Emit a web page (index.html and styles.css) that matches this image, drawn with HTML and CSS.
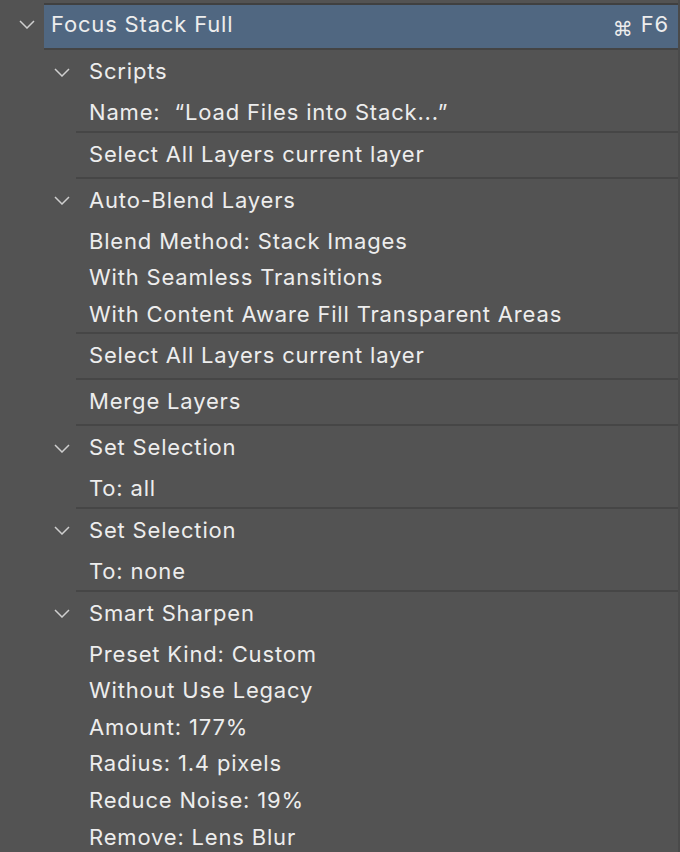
FILE: index.html
```html
<!DOCTYPE html>
<html>
<head>
<meta charset="utf-8">
<link rel="stylesheet" href="styles.css">
</head>
<body>
<div class="panel">
  <div class="action">
    <div class="action-chev">
      <svg width="16" height="9" viewBox="0 0 16 9"><path d="M1 1 L8 8 L15 1" fill="none" stroke="#cfcfcf" stroke-width="1.5"/></svg>
    </div>
    <div class="action-title">
      <span>Focus Stack Full</span>
      <span class="key"><span class="cmd">⌘</span>F6</span>
    </div>
  </div>

  <div class="step">
    <div class="step-chev"><svg width="16" height="9" viewBox="0 0 16 9"><path d="M1 1 L8 8 L15 1" fill="none" stroke="#cfcfcf" stroke-width="1.5"/></svg></div>
    <div class="step-body">
      <div class="row head">Scripts</div>
      <div class="row">Name:  “Load Files into Stack...”</div>
    </div>
  </div>

  <div class="step">
    <div class="step-chev"></div>
    <div class="step-body">
      <div class="row head">Select All Layers current layer</div>
    </div>
  </div>

  <div class="step">
    <div class="step-chev"><svg width="16" height="9" viewBox="0 0 16 9"><path d="M1 1 L8 8 L15 1" fill="none" stroke="#cfcfcf" stroke-width="1.5"/></svg></div>
    <div class="step-body">
      <div class="row head">Auto-Blend Layers</div>
      <div class="row">Blend Method: Stack Images</div>
      <div class="row">With Seamless Transitions</div>
      <div class="row">With Content Aware Fill Transparent Areas</div>
    </div>
  </div>

  <div class="step">
    <div class="step-chev"></div>
    <div class="step-body">
      <div class="row head">Select All Layers current layer</div>
    </div>
  </div>

  <div class="step">
    <div class="step-chev"></div>
    <div class="step-body">
      <div class="row head">Merge Layers</div>
    </div>
  </div>

  <div class="step">
    <div class="step-chev"><svg width="16" height="9" viewBox="0 0 16 9"><path d="M1 1 L8 8 L15 1" fill="none" stroke="#cfcfcf" stroke-width="1.5"/></svg></div>
    <div class="step-body">
      <div class="row head">Set Selection</div>
      <div class="row">To: all</div>
    </div>
  </div>

  <div class="step">
    <div class="step-chev"><svg width="16" height="9" viewBox="0 0 16 9"><path d="M1 1 L8 8 L15 1" fill="none" stroke="#cfcfcf" stroke-width="1.5"/></svg></div>
    <div class="step-body">
      <div class="row head">Set Selection</div>
      <div class="row">To: none</div>
    </div>
  </div>

  <div class="step">
    <div class="step-chev"><svg width="16" height="9" viewBox="0 0 16 9"><path d="M1 1 L8 8 L15 1" fill="none" stroke="#cfcfcf" stroke-width="1.5"/></svg></div>
    <div class="step-body">
      <div class="row head">Smart Sharpen</div>
      <div class="row">Preset Kind: Custom</div>
      <div class="row">Without Use Legacy</div>
      <div class="row">Amount: 177%</div>
      <div class="row">Radius: 1.4 pixels</div>
      <div class="row">Reduce Noise: 19%</div>
      <div class="row">Remove: Lens Blur</div>
    </div>
  </div>
</div>
</body>
</html>
```

FILE: styles.css
```css
html, body {
  margin: 0;
  padding: 0;
  background: #535353;
  height: 100%;
  overflow: hidden;
}

.panel {
  width: 680px;
  height: 852px;
  border-right: 2px solid #4a4a4a;
  padding-top: 3px;
  box-sizing: border-box;
  font-family: Inter, "Noto Sans", sans-serif;
  font-size: 22px;
  letter-spacing: 0.82px;
  color: #ededed;
}

.action {
  display: flex;
  align-items: flex-start;
}

.action-chev {
  width: 44px;
  flex: none;
  display: flex;
  justify-content: center;
  padding: 17px 0 0 10px;
  box-sizing: border-box;
}

.action-title {
  flex: 1;
  height: 47px;
  box-sizing: border-box;
  border-top: 2px solid #404040;
  border-bottom: 2px solid #444444;
  background: #506781;
  display: flex;
  align-items: center;
  justify-content: space-between;
  padding: 0 9px 6px 7px;
}

.action-title span {
  line-height: 1;
}

.key {
  display: flex;
  align-items: center;
  gap: 8px;
}

.cmd {
  font-family: "DejaVu Sans", sans-serif;
  font-size: 20px;
  letter-spacing: 0;
  margin-top: 11px;
}

.step {
  display: flex;
  padding-left: 44px;
}

.step-chev {
  width: 32px;
  height: 44px;
  flex: none;
  display: flex;
  justify-content: center;
  align-items: center;
  padding-left: 4px;
  box-sizing: border-box;
}

.step-body {
  flex: 1;
  border-bottom: 2px solid #464646;
  padding: 0 0 2px 13px;
}

.row {
  height: 36.6px;
  padding-top: 3.5px;
  box-sizing: border-box;
  display: flex;
  align-items: center;
  white-space: pre;
}

.row.head {
  height: 42px;
  padding-top: 0;
}
```
